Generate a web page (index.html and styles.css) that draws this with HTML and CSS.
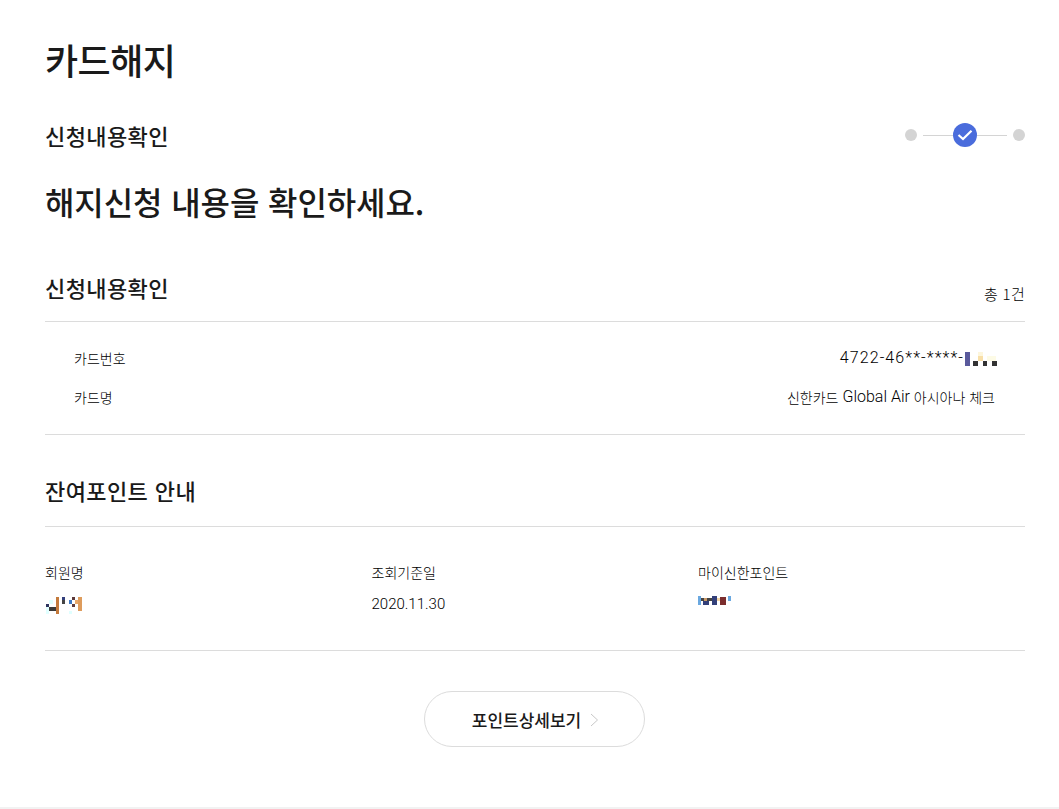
FILE: index.html
```html
<!DOCTYPE html>
<html lang="ko">
<head>
  <meta charset="UTF-8">
  <meta name="viewport" content="width=device-width, initial-scale=1.0">
  <title>카드해지</title>
  <link rel="stylesheet" href="styles.css">
</head>
<body>
  <div class="container">
    <h1 class="page-title">카드해지</h1>

    <div class="step-head">
      <h2 class="step-title">신청내용확인</h2>
      <div class="steps">
        <span class="dot"></span>
        <span class="line"></span>
        <span class="current">
          <svg width="24" height="24" viewBox="0 0 24 24"><path d="M5.5 12l4.5 4 8.5-8.3" fill="none" stroke="#fff" stroke-width="2.2"/></svg>
        </span>
        <span class="line short"></span>
        <span class="dot"></span>
      </div>
    </div>

    <p class="lead">해지신청 내용을 확인하세요.</p>

    <div class="section-head first">
      <h3 class="section-title">신청내용확인</h3>
      <span class="total">총 1건</span>
    </div>
    <dl class="card-info">
      <div class="card-row">
        <dt>카드번호</dt>
        <dd><span class="latin card-num">4722-46**-****-</span><svg class="mosaic-card" width="33" height="15" viewBox="0 0 33 15"><rect x="1" y="0" width="5" height="14" fill="#5a5a9c"/><rect x="14" y="0" width="5" height="4" fill="#fdf6dc"/><rect x="14" y="4" width="5" height="5" fill="#f8dfa8"/><rect x="23" y="4" width="9" height="5" fill="#fdfbe6"/><rect x="9" y="9" width="5" height="5" fill="#333"/><rect x="19" y="9" width="4" height="5" fill="#333"/><rect x="28" y="9" width="5" height="5" fill="#333"/></svg></dd>
      </div>
      <div class="card-row">
        <dt>카드명</dt>
        <dd>신한카드&nbsp;<span class="latin">Global Air</span>&nbsp;아시아나 체크</dd>
      </div>
    </dl>

    <div class="section-head">
      <h3 class="section-title">잔여포인트 안내</h3>
    </div>
    <div class="point-info">
      <div class="point-col">
        <div class="point-label">회원명</div>
        <div class="point-value">
          <svg class="mosaic-name" width="38" height="18" viewBox="0 0 38 18"><rect x="1" y="7" width="3" height="3" fill="#2f3560"/><rect x="1" y="10" width="3" height="7" fill="#e0ffff"/><rect x="4" y="3" width="4" height="4" fill="#e0ffff"/><rect x="4" y="10" width="7" height="4" fill="#3a3a3a"/><rect x="11" y="0" width="3" height="17" fill="#c47a3c"/><rect x="17" y="0" width="3" height="3" fill="#34407c"/><rect x="17" y="3" width="3" height="4" fill="#444"/><rect x="24" y="3" width="3" height="4" fill="#3d78c4"/><rect x="24" y="14" width="3" height="3" fill="#e0ffff"/><rect x="27" y="0" width="3" height="3" fill="#5c3a3a"/><rect x="27" y="7" width="3" height="3" fill="#5c3a3a"/><rect x="30" y="3" width="3" height="4" fill="#e8a86a"/><rect x="33" y="0" width="4" height="14" fill="#de9c5c"/></svg>
        </div>
      </div>
      <div class="point-col">
        <div class="point-label">조회기준일</div>
        <div class="point-value">2020.11.30</div>
      </div>
      <div class="point-col">
        <div class="point-label">마이신한포인트</div>
        <div class="point-value">
          <svg class="mosaic-point" width="34" height="12" viewBox="0 0 34 12"><rect x="0" y="0" width="3" height="9" fill="#6aa8e0"/><rect x="3" y="2" width="11" height="3" fill="#444"/><rect x="5" y="5" width="6" height="4" fill="#33407a"/><rect x="6" y="2" width="3" height="3" fill="#c99a6a"/><rect x="14" y="0" width="5" height="9" fill="#33407a"/><rect x="19" y="2" width="4" height="3" fill="#f3d5a5"/><rect x="22" y="1" width="6" height="8" fill="#7c2e2e"/><rect x="30" y="0" width="3" height="5" fill="#6aa8e0"/></svg>
        </div>
      </div>
    </div>

    <div class="actions">
      <a class="btn-detail" href="#">포인트상세보기
        <svg class="chevron" width="9" height="14" viewBox="0 0 9 14"><path d="M1 1l6.5 6L1 13" fill="none" stroke="#c8c8c8" stroke-width="1"/></svg>
      </a>
    </div>
  </div>
  <div class="bottom-line"></div>
</body>
</html>
```

FILE: styles.css
```css
*{
  box-sizing: border-box;
}

html,body{
  margin: 0;
  padding: 0;
}

body{
  background: #fff;
  color: #000;
  font-family: "Noto Sans CJK KR", "Noto Sans", sans-serif;
}

.container{
  padding: 0 34px 0 45px;
  height: 807px;
  overflow: hidden;
}

h1,h2,h3,p,dl,dd{
  margin: 0;
}

.page-title{
  margin-top: 33px;
  font-size: 36px;
  line-height: 52px;
  font-weight: 500;
  letter-spacing: -.5px;
  color: #1a1a1a;
}

.step-head{
  display: flex;
  justify-content: space-between;
  align-items: center;
  margin-top: 34px;
  height: 32px;
}

.step-title,.section-title{
  font-size: 22px;
  line-height: 32px;
  font-weight: 500;
  letter-spacing: .4px;
  color: #1a1a1a;
}

.steps{
  display: flex;
  align-items: center;
}

.dot{
  width: 12px;
  height: 12px;
  border-radius: 50%;
  background: #d4d4d4;
}

.line{
  width: 30px;
  height: 1px;
  margin-left: 6px;
  background: #d4d4d4;
}

.line.short{
  width: 30px;
  margin-left: 0;
  margin-right: 6px;
}

.current{
  display: block;
  width: 24px;
  height: 24px;
  border-radius: 50%;
  background: #4a6cdc;
}

.current svg{
  display: block;
}

.lead{
  margin-top: 27px;
  font-size: 32px;
  line-height: 46px;
  font-weight: 500;
  letter-spacing: -.1px;
  color: #1a1a1a;
}

.section-head{
  display: flex;
  justify-content: space-between;
  align-items: flex-end;
  padding-bottom: 20px;
  border-bottom: 1px solid #dcdcdc;
  margin-top: 39px;
}

.section-head.first{
  margin-top: 47px;
  padding-bottom: 18px;
}

.total{
  font-size: 15px;
  line-height: 22px;
  font-weight: 300;
  letter-spacing: .3px;
  margin-bottom: -2px;
}

.card-info{
  padding: 16px 30px 18px 29px;
  border-bottom: 1px solid #dcdcdc;
}

.card-row{
  display: flex;
  justify-content: space-between;
  align-items: center;
  height: 39px;
  font-size: 14px;
  font-weight: 300;
}

.card-row dd{
  display: flex;
  align-items: center;
  font-weight: 300;
}

.latin{
  font-family: Roboto, sans-serif;
  font-size: 16px;
  font-weight: 300;
}

.card-num{
  letter-spacing: 1.1px;
}

.mosaic-card{
  display: block;
  margin-top: 4px;
  margin-right: -2px;
}

.point-info{
  display: flex;
  height: 124px;
  padding-top: 34px;
  border-bottom: 1px solid #dcdcdc;
}

.point-col{
  width: 326.5px;
}

.point-label{
  font-size: 14px;
  line-height: 22px;
  font-weight: 300;
}

.point-value{
  display: flow-root;
  margin-top: 10px;
  height: 22px;
  font-family: Roboto, sans-serif;
  font-size: 15px;
  line-height: 22px;
  font-weight: 300;
}

.point-value svg{
  display: block;
}

.point-value .mosaic-name{
  margin-top: 4px;
}

.point-value .mosaic-point{
  margin-top: 3px;
}

.actions{
  display: flex;
  justify-content: center;
  margin-top: 40px;
  padding-right: 2px;
}

.btn-detail{
  display: flex;
  align-items: center;
  justify-content: center;
  gap: 9px;
  width: 221px;
  height: 56px;
  padding-left: 3px;
  border: 1px solid #dcdcdc;
  border-radius: 28px;
  background: #fff;
  color: #1a1a1a;
  font-size: 17px;
  font-weight: 500;
  text-decoration: none;
}

.chevron{
  margin-top: 2px;
}

.bottom-line{
  height: 2px;
  background: #f2f2f2;
}
```
